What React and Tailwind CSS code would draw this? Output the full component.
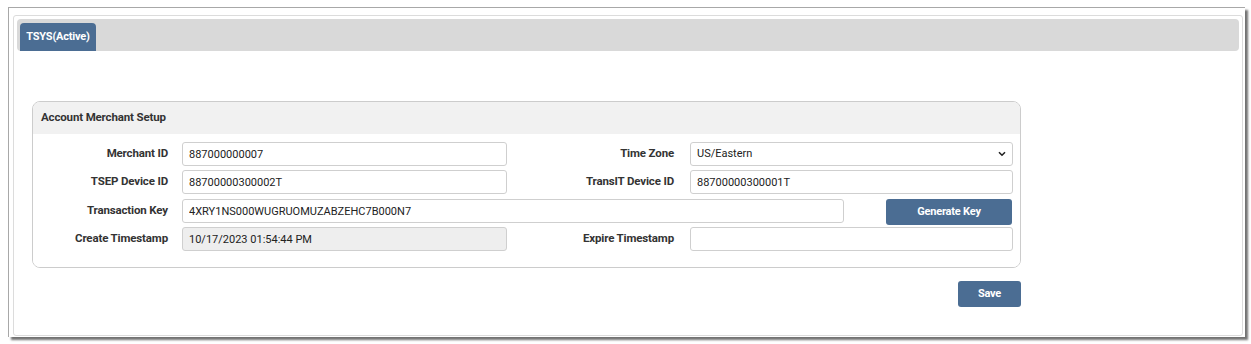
export default function App() {
  const font = { fontFamily: "Roboto, 'Liberation Sans', sans-serif" };
  const input =
    "h-[24px] rounded-[3px] border border-[#cfcfcf] px-[6px] text-[11px] text-[#222] outline-none";
  const label = "text-right text-[11.5px] font-bold tracking-[-0.15px] text-[#333]";

  return (
    <div className="min-h-screen bg-white" style={font}>
      <div className="pl-[8px] pt-[7px]">
        <div className="h-[330px] w-[1237px] border-l border-t border-[#a8a8a8] pl-[4px] pt-[7px] shadow-[3px_3px_2px_rgba(0,0,0,0.55)]">
          <div className="h-[321px] w-[1230px] rounded-[3px] border border-[#dcdcdc] px-[3px] pt-[3px]">
            <div className="flex h-[32px] items-end rounded-[4px] bg-[#d9d9d9] px-[3px]">
              <div className="flex h-[28px] w-[76px] items-center justify-center rounded-t-[4px] bg-[#4b6d93] text-[11px] font-bold tracking-[-0.2px] text-white">
                TSYS(Active)
              </div>
            </div>

            <div className="ml-[15px] mt-[50px] w-[989px]">
              <div className="overflow-hidden rounded-[8px] border border-[#cccccc]">
                <div className="flex h-[32px] items-center bg-[#f1f1f1] px-[8px] text-[11.5px] font-bold tracking-[-0.15px] text-[#333]">
                  Account Merchant Setup
                </div>
                <div className="bg-white pb-[16px] pt-[8px]">
                  <div className="flex items-center">
                    <div className={`${label} w-[135px]`}>Merchant ID</div>
                    <input className={`${input} ml-[14px] w-[325px] bg-white`} defaultValue="887000000007" readOnly />
                    <div className={`${label} w-[167px]`}>Time Zone</div>
                    <div className={`${input} ml-[16px] flex w-[323px] items-center justify-between bg-white pr-[6px]`}>
                      <span>US/Eastern</span>
                      <svg width="8" height="6" viewBox="0 0 8 6" fill="none">
                        <path d="M1 1.2l3 3 3-3" stroke="#222" strokeWidth="1.6" />
                      </svg>
                    </div>
                  </div>
                  <div className="mt-[4px] flex items-center">
                    <div className={`${label} w-[135px]`}>TSEP Device ID</div>
                    <input className={`${input} ml-[14px] w-[325px] bg-white`} defaultValue="88700000300002T" readOnly />
                    <div className={`${label} w-[167px]`}>TransIT Device ID</div>
                    <input className={`${input} ml-[16px] w-[323px] bg-white`} defaultValue="88700000300001T" readOnly />
                  </div>
                  <div className="mt-[5px] flex items-start">
                    <div className={`${label} flex h-[24px] w-[135px] items-center justify-end`}>Transaction Key</div>
                    <input
                      className={`${input} ml-[14px] w-[662px] bg-white`}
                      defaultValue="4XRY1NS000WUGRUOMUZABZEHC7B000N7"
                      readOnly
                    />
                    <button className="ml-[42px] h-[26px] w-[126px] rounded-[3px] bg-[#4b6d93] text-[11px] font-bold tracking-[-0.2px] text-white">
                      Generate Key
                    </button>
                  </div>
                  <div className="mt-[2px] flex items-center">
                    <div className={`${label} w-[135px]`}>Create Timestamp</div>
                    <input
                      className={`${input} ml-[14px] w-[325px] bg-[#eeeeee]`}
                      defaultValue="10/17/2023 01:54:44 PM"
                      readOnly
                    />
                    <div className={`${label} w-[167px]`}>Expire Timestamp</div>
                    <input className={`${input} ml-[16px] w-[323px] bg-white`} defaultValue="" readOnly />
                  </div>
                </div>
              </div>
              <div className="mt-[13px] flex justify-end">
                <button className="h-[26px] w-[63px] rounded-[3px] bg-[#4b6d93] text-[11px] font-bold tracking-[-0.2px] text-white">
                  Save
                </button>
              </div>
            </div>
          </div>
        </div>
      </div>
    </div>
  );
}
